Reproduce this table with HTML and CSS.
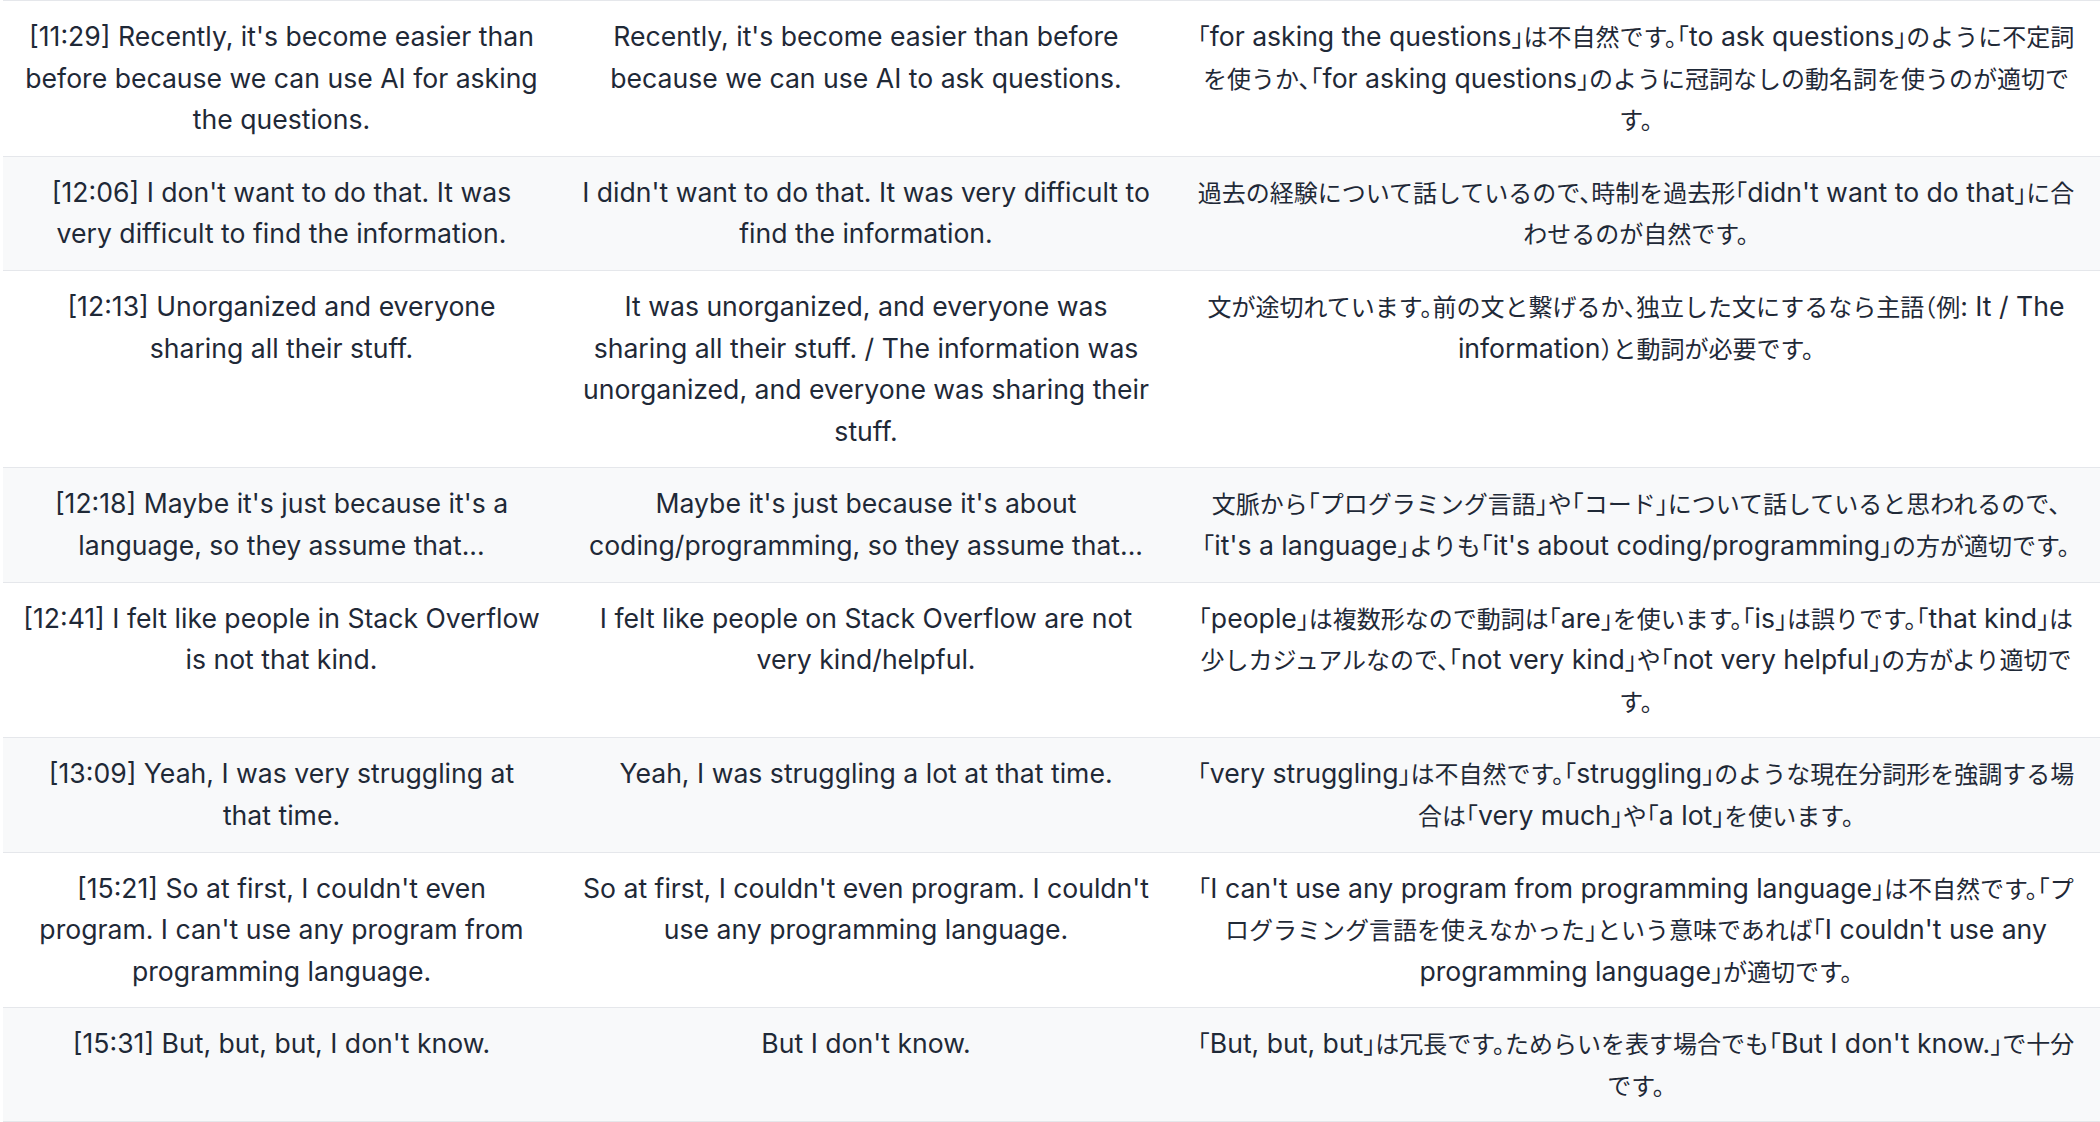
FILE: index.html
```html
<!DOCTYPE html>
<html lang="ja">
<head>
  <meta charset="UTF-8">
  <meta name="viewport" content="width=device-width, initial-scale=1.0">
  <title>English Corrections</title>
  <link rel="stylesheet" href="styles.css">
</head>
<body>
  <div class="review">
    <!-- Corrections table: original / corrected / note -->
    <table class="corrections">
      <colgroup>
        <col class="col-original">
        <col class="col-corrected">
        <col class="col-note">
      </colgroup>
      <tbody>
        <tr>
          <td>[11:29] Recently, it's become easier than before because we can use AI for asking the questions.</td>
          <td>Recently, it's become easier than before because we can use AI to ask questions.</td>
          <td><span class="ja">「</span>for asking the questions<span class="ja">」は不自然です。「</span>to ask questions<span class="ja">」のように不定詞を使うか、「</span>for asking questions<span class="ja">」のように冠詞なしの動名詞を使うのが適切です。</span></td>
        </tr>
        <tr>
          <td>[12:06] I don't want to do that. It was very difficult to find the information.</td>
          <td>I didn't want to do that. It was very difficult to find the information.</td>
          <td><span class="ja">過去の経験について話しているので、時制を過去形「</span>didn't want to do that<span class="ja">」に合わせるのが自然です。</span></td>
        </tr>
        <tr>
          <td>[12:13] Unorganized and everyone sharing all their stuff.</td>
          <td>It was unorganized, and everyone was sharing all their stuff. / The information was unorganized, and everyone was sharing their stuff.</td>
          <td><span class="ja">文が途切れています。前の文と繋げるか、独立した文にするなら主語（例</span>: It / The information<span class="ja">）と動詞が必要です。</span></td>
        </tr>
        <tr>
          <td>[12:18] Maybe it's just because it's a language, so they assume that...</td>
          <td>Maybe it's just because it's about coding/programming, so they assume that...</td>
          <td><span class="ja">文脈から「プログラミング言語」や「コード」について話していると思われるので、「</span>it's a language<span class="ja">」よりも「</span>it's about coding/programming<span class="ja">」の方が適切です。</span></td>
        </tr>
        <tr>
          <td>[12:41] I felt like people in Stack Overflow is not that kind.</td>
          <td>I felt like people on Stack Overflow are not very kind/helpful.</td>
          <td><span class="ja">「</span>people<span class="ja">」は複数形なので動詞は「</span>are<span class="ja">」を使います。「</span>is<span class="ja">」は誤りです。「</span>that kind<span class="ja">」は少しカジュアルなので、「</span>not very kind<span class="ja">」や「</span>not very helpful<span class="ja">」の方がより適切です。</span></td>
        </tr>
        <tr>
          <td>[13:09] Yeah, I was very struggling at that time.</td>
          <td>Yeah, I was struggling a lot at that time.</td>
          <td><span class="ja">「</span>very struggling<span class="ja">」は不自然です。「</span>struggling<span class="ja">」のような現在分詞形を強調する場合は「</span>very much<span class="ja">」や「</span>a lot<span class="ja">」を使います。</span></td>
        </tr>
        <tr>
          <td>[15:21] So at first, I couldn't even program. I can't use any program from programming language.</td>
          <td>So at first, I couldn't even program. I couldn't use any programming language.</td>
          <td><span class="ja">「</span>I can't use any program from programming language<span class="ja">」は不自然です。「プログラミング言語を使えなかった」という意味であれば「</span>I couldn't use any programming language<span class="ja">」が適切です。</span></td>
        </tr>
        <tr>
          <td>[15:31] But, but, but, I don't know.</td>
          <td>But I don't know.</td>
          <td><span class="ja">「</span>But, but, but<span class="ja">」は冗長です。ためらいを表す場合でも「</span>But I don't know.<span class="ja">」で十分です。</span></td>
        </tr>
      </tbody>
    </table>
  </div>
</body>
</html>
```

FILE: styles.css
```css
body {
  margin: 0;
  padding: 0;
  background-color: #fff;
  font-family: Inter, "Noto Sans CJK JP", sans-serif;
  color: #1f2937;
}
.review {
  padding-left: 3px;
}
.corrections {
  width: 2097px;
  table-layout: fixed;
  border-collapse: collapse;
  border-top: 1px solid #e5e7eb;
}
.col-original {
  width: 557px;
}
.col-corrected {
  width: 612px;
}
.col-note {
  width: 928px;
}
.corrections td {
  padding: 15px 20px;
  font-size: 26.6px;
  line-height: 41.6px;
  text-align: center;
  vertical-align: top;
  border-bottom: 1px solid #e5e7eb;
}
.corrections tr:nth-child(even) {
  background-color: #f8f9fa;
}
.ja {
  font-family: "Noto Sans CJK JP", sans-serif;
  font-size: 24px;
  line-height: 1;
  font-feature-settings: "halt";
}
```
